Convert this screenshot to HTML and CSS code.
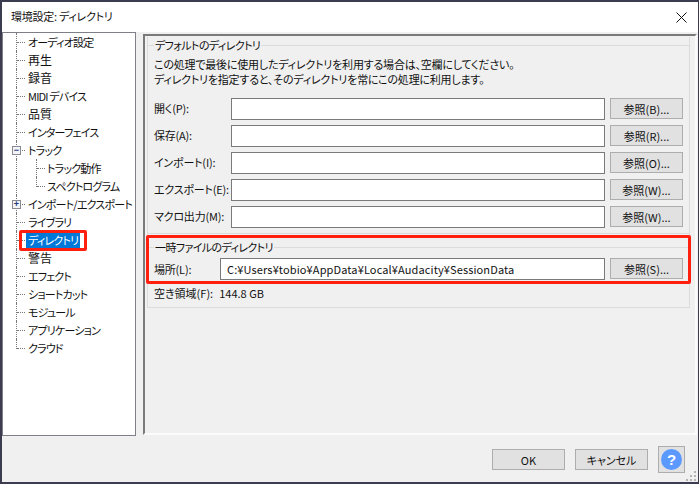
FILE: index.html
```html
<!DOCTYPE html>
<html lang="ja">
<head>
<meta charset="utf-8">
<title>環境設定: ディレクトリ</title>
<link rel="stylesheet" href="styles.css">
</head>
<body>
<div class="window">
  <header class="titlebar">
    <span class="title">環境設定: ディレクトリ</span>
    <svg class="close" width="11" height="11" viewBox="0 0 11 11"><path d="M.5.5l10 10M10.500.5l-10 10" stroke="#111" stroke-width="1" fill="none"/></svg>
  </header>
  <div class="main">
    <nav class="tree">
      <div class="row"><i class="stem"></i><span class="label">オーディオ設定</span></div>
      <div class="row"><i class="stem"></i><span class="label kanji">再生</span></div>
      <div class="row"><i class="stem"></i><span class="label kanji">録音</span></div>
      <div class="row"><i class="stem"></i><span class="label">MIDI デバイス</span></div>
      <div class="row"><i class="stem"></i><span class="label kanji">品質</span></div>
      <div class="row"><i class="stem"></i><span class="label">インターフェイス</span></div>
      <div class="row"><i class="stem"><b class="toggle">−</b></i><span class="label">トラック</span></div>
      <div class="row"><i class="pass"></i><i class="stem sub"></i><span class="label">トラック動作</span></div>
      <div class="row"><i class="pass"></i><i class="stem sub end"></i><span class="label">スペクトログラム</span></div>
      <div class="row"><i class="stem"><b class="toggle">+</b></i><span class="label">インポート/エクスポート</span></div>
      <div class="row"><i class="stem"></i><span class="label">ライブラリ</span></div>
      <div class="row"><i class="stem"></i><span class="label selected">ディレクトリ</span><span class="mark mark-tree"></span></div>
      <div class="row"><i class="stem"></i><span class="label kanji">警告</span></div>
      <div class="row"><i class="stem"></i><span class="label">エフェクト</span></div>
      <div class="row"><i class="stem"></i><span class="label">ショートカット</span></div>
      <div class="row"><i class="stem"></i><span class="label">モジュール</span></div>
      <div class="row"><i class="stem"></i><span class="label">アプリケーション</span></div>
      <div class="row"><i class="stem end"></i><span class="label">クラウド</span></div>
    </nav>
    <section class="panel">
      <div class="pane">
        <fieldset class="group first">
          <legend>デフォルトのディレクトリ</legend>
          <p class="note">この処理で最後に使用したディレクトリを利用する場合は、空欄にしてください。<br>ディレクトリを指定すると、そのディレクトリを常にこの処理に利用します。</p>
          <div class="field"><label>開く(P):</label><input class="input" type="text"><button class="btn browse">参照(B)...</button></div>
          <div class="field"><label>保存(A):</label><input class="input" type="text"><button class="btn browse">参照(R)...</button></div>
          <div class="field"><label>インポート(I):</label><input class="input" type="text"><button class="btn browse">参照(O)...</button></div>
          <div class="field"><label>エクスポート(E):</label><input class="input" type="text"><button class="btn browse">参照(W)...</button></div>
          <div class="field"><label>マクロ出力(M):</label><input class="input" type="text"><button class="btn browse">参照(W)...</button></div>
        </fieldset>
        <div class="temp">
          <fieldset class="group second">
            <legend>一時ファイルのディレクトリ</legend>
            <div class="field"><label class="short">場所(L):</label><input class="input" type="text" value="C:¥Users¥tobio¥AppData¥Local¥Audacity¥SessionData"><button class="btn browse">参照(S)...</button></div>
          </fieldset>
          <span class="mark mark-temp"></span>
        </div>
        <p class="free"><span>空き領域(F):</span><span>144.8 GB</span></p>
      </div>
    </section>
  </div>
  <footer class="footer">
    <button class="btn action">OK</button>
    <button class="btn action">キャンセル</button>
    <button class="help" aria-label="ヘルプ"><span class="help-dot">?</span></button>
    <svg class="grip" width="11" height="11" viewBox="0 0 11 11"><path d="M8 0h2v2H8zM4 4h2v2H4zM8 4h2v2H8zM0 8h2v2H0zM4 8h2v2H4zM8 8h2v2H8z" fill="#b4b4b4"/></svg>
  </footer>
</div>
</body>
</html>
```
FILE: styles.css
```css
* { box-sizing: border-box; }
html, body { margin: 0; padding: 0; background: #fff; }
body {
  width: 699px;
  height: 484px;
  overflow: hidden;
  font: 11px/16px "Noto Sans CJK JP", "Noto Sans", sans-serif;
  font-feature-settings: "palt";
  color: #111;
}
.window {
  width: 699px;
  height: 484px;
  border: 2px solid #3c3c50;
  border-width: 2px 1px 2px 2px;
  margin-bottom: 1px;
  background: #f0f0f0;
  display: flex;
  flex-direction: column;
}
.titlebar {
  height: 30px;
  flex: none;
  background: #fff;
  display: flex;
  align-items: center;
  justify-content: space-between;
  padding: 0 11px 0 9px;
}
.title { letter-spacing: -0.25px; padding-bottom: 2px; }
.main { flex: none; height: 404px; display: flex; gap: 7px; }
.tree {
  width: 134px;
  height: 404px;
  background: #fff;
  border: 1px solid #7f7f87;
  flex: none;
}
.row {
  height: 18px;
  display: flex;
  align-items: center;
  padding-left: 13px;
  position: relative;
  white-space: nowrap;
}
.stem {
  display: block;
  position: relative;
  flex: none;
  width: 10px;
  height: 18px;
  border-left: 1px dotted #777;
}
.stem::after {
  content: "";
  position: absolute;
  left: 0;
  top: 9px;
  width: 8px;
  border-top: 1px dotted #777;
}
.stem.end { height: 10px; align-self: flex-start; }
.stem.sub { width: 9px; }
.pass {
  display: block;
  flex: none;
  width: 20px;
  height: 18px;
  border-left: 1px dotted #777;
}
.toggle {
  position: absolute;
  z-index: 1;
  left: -5px;
  top: 5px;
  width: 9px;
  height: 9px;
  background: #f4f4f8;
  border: 1px solid #8a8a92;
  color: #223a7a;
  font: bold 9px/7px "Liberation Sans", sans-serif;
  text-align: center;
}
.label { padding: 0 2px; line-height: 16px; letter-spacing: -0.8px; }
.label.kanji { font-size: 12px; letter-spacing: 0; }
.selected { background: #0078d7; color: #fff; min-width: 52px; }
.mark {
  position: absolute;
  border: 3px solid #ff2010;
  border-radius: 2px;
  pointer-events: none;
}
.mark-tree { left: 16px; top: -1px; width: 68px; height: 21px; z-index: 2; }
.panel {
  width: 554px;
  height: 401px;
  margin-top: 2px;
  flex: none;
  border: 2px solid #fbfbfb;
  border-top-color: #7a7a7a;
  border-left-color: #7a7a7a;
  padding: 1px 5px 0 2px;
}
.pane {
  height: 271px;
  border: 1px solid #dcdcdc;
  border-top: 0;
}
.group {
  margin: 0;
  padding: 0;
  min-width: 0;
  border: 0;
  border-top: 1px solid #dcdcdc;
}
.group legend {
  margin-left: 6px;
  padding: 0 1px;
  line-height: 16px;
  letter-spacing: -0.6px;
}
.first { border-bottom: 1px solid #dcdcdc; height: 197px; }
.note { margin: 4px 0 8px 6px; line-height: 15px; white-space: nowrap; letter-spacing: -0.2px; }
.field { display: flex; align-items: center; height: 27px; padding-left: 6px; }
.field label { width: 77px; flex: none; white-space: nowrap; letter-spacing: -0.2px; padding-bottom: 2px; }
.field label.short { width: 66px; padding-bottom: 0; }
.input {
  flex: none;
  height: 22px;
  margin: 0;
  padding: 0 6px;
  font: inherit;
  font-feature-settings: inherit;
  letter-spacing: 0.12px;
  color: #111;
  background: #fff;
  border: 1px solid #7a7a7a;
  border-radius: 0;
  width: 374px;
}
.short + .input { width: 385px; }
.btn {
  flex: none;
  font: inherit;
  font-feature-settings: inherit;
  color: #111;
  background: #e1e1e1;
  border: 1px solid #adadad;
  padding: 0;
  width: 73px;
  height: 21px;
  line-height: 18px;
}
.browse { margin-left: 5px; }
.temp { position: relative; margin-top: 5px; }
.second { height: 38px; }
.mark-temp { left: -2px; top: -4px; width: 545px; height: 49px; }
.free { margin: 8px 0 0 6px; display: flex; gap: 6px; }
.footer {
  flex: 1;
  position: relative;
  display: flex;
  align-items: flex-start;
  justify-content: flex-end;
  padding: 13px 13px 0 0;
  gap: 10px;
}
.help {
  width: 27px;
  height: 27px;
  margin-top: -3px;
  background: #e1e1e1;
  border: 1px solid #adadad;
  padding: 0;
  display: flex;
  align-items: center;
  justify-content: center;
}
.help-dot {
  width: 21px;
  height: 21px;
  border-radius: 50%;
  background: #5c99ff;
  color: #fff;
  font: bold 15px/21px "Liberation Sans", sans-serif;
  text-align: center;
}
.grip { position: absolute; right: 1px; bottom: 0; }
```
